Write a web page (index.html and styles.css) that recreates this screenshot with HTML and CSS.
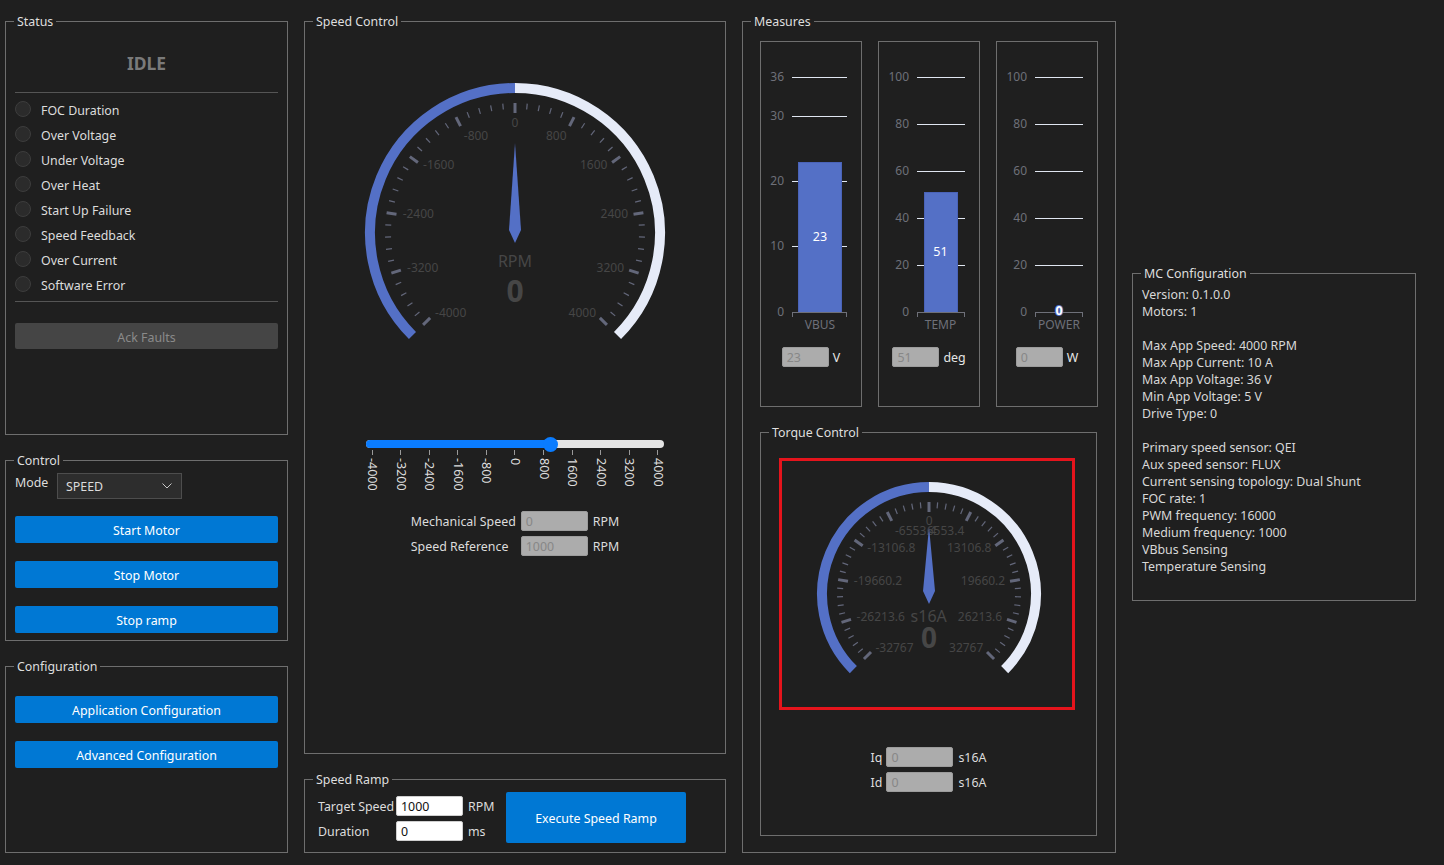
FILE: index.html
```html
<!DOCTYPE html>
<html lang="en">
<head>
<meta charset="utf-8">
<title>Motor Control</title>
<link rel="stylesheet" href="styles.css">
</head>
<body>
<div class="app">

  <div class="col col-left">
    <section class="group status">
      <div class="group-title">Status</div>
      <div class="status-body">
        <div class="state">IDLE</div>
        <div class="divider"></div>
        <ul class="faults">
          <li class="fault"><span class="led"></span><span class="fault-name">FOC Duration</span></li>
          <li class="fault"><span class="led"></span><span class="fault-name">Over Voltage</span></li>
          <li class="fault"><span class="led"></span><span class="fault-name">Under Voltage</span></li>
          <li class="fault"><span class="led"></span><span class="fault-name">Over Heat</span></li>
          <li class="fault"><span class="led"></span><span class="fault-name">Start Up Failure</span></li>
          <li class="fault"><span class="led"></span><span class="fault-name">Speed Feedback</span></li>
          <li class="fault"><span class="led"></span><span class="fault-name">Over Current</span></li>
          <li class="fault"><span class="led"></span><span class="fault-name">Software Error</span></li>
        </ul>
        <div class="divider divider-bottom"></div>
        <div class="btn btn-ack">Ack Faults</div>
      </div>
    </section>

    <section class="group control">
      <div class="group-title">Control</div>
      <div class="control-body">
        <div class="mode-row">
          <span class="mode-label">Mode</span>
          <div class="select">
            <span>SPEED</span>
            <svg class="chevron" width="10" height="6" viewBox="0 0 10 6"><polyline points="0.5,0.5 5,5 9.5,0.5"/></svg>
          </div>
        </div>
        <div class="btn-stack">
          <div class="btn">Start Motor</div>
          <div class="btn">Stop Motor</div>
          <div class="btn">Stop ramp</div>
        </div>
      </div>
    </section>

    <section class="group config">
      <div class="group-title">Configuration</div>
      <div class="config-body">
        <div class="btn-stack">
          <div class="btn">Application Configuration</div>
          <div class="btn">Advanced Configuration</div>
        </div>
      </div>
    </section>
  </div>

  <div class="col col-speed">
    <section class="group speed">
      <div class="group-title">Speed Control</div>
      <svg class="gauge" width="420" height="316" viewBox="305 29 420 316">
        <path class="arc arc-on" d="M 412.47 335.53 A 145 145 0 0 1 515 88"/>
        <path class="arc arc-off" d="M 515 88 A 145 145 0 0 1 617.53 335.53"/>
        <g id="speed-ticks"></g>
        <g class="g-label">
          <text x="515" y="122.7">0</text>
          <text x="476" y="135.7">-800</text>
          <text x="556.3" y="135.7">800</text>
          <text x="438.7" y="164.3">-1600</text>
          <text x="593.7" y="164.3">1600</text>
          <text x="418.3" y="213.3">-2400</text>
          <text x="614.3" y="213.3">2400</text>
          <text x="422.7" y="267.3">-3200</text>
          <text x="610.3" y="267.3">3200</text>
          <text x="450.7" y="312.3">-4000</text>
          <text x="582.3" y="312.3">4000</text>
        </g>
        <polygon class="needle" points="515,143 509,230 515,243 521,230"/>
        <text class="g-unit" x="515" y="261">RPM</text>
        <text class="g-value" x="515" y="290">0</text>
      </svg>

      <div class="slider">
        <div class="track" style="--v:0.625">
          <div class="track-fill"></div>
          <div class="thumb"></div>
        </div>
        <div class="scale">
          <div class="mark"><span>-4000</span></div>
          <div class="mark"><span>-3200</span></div>
          <div class="mark"><span>-2400</span></div>
          <div class="mark"><span>-1600</span></div>
          <div class="mark"><span>-800</span></div>
          <div class="mark"><span>0</span></div>
          <div class="mark"><span>800</span></div>
          <div class="mark"><span>1600</span></div>
          <div class="mark"><span>2400</span></div>
          <div class="mark"><span>3200</span></div>
          <div class="mark"><span>4000</span></div>
        </div>
      </div>

      <div class="readout">
        <span>Mechanical Speed</span><div class="field">0</div><span>RPM</span>
        <span>Speed Reference</span><div class="field">1000</div><span>RPM</span>
      </div>
    </section>

    <section class="group ramp">
      <div class="group-title">Speed Ramp</div>
      <div class="ramp-body">
        <div class="ramp-grid">
          <span>Target Speed</span><div class="field field-white">1000</div><span class="unit">RPM</span>
          <span>Duration</span><div class="field field-white">0</div><span class="unit">ms</span>
        </div>
        <div class="btn btn-exec">Execute Speed Ramp</div>
      </div>
    </section>
  </div>

  <div class="col col-measures">
    <section class="group measures">
      <div class="group-title">Measures</div>
      <div class="bars">
        <div class="bar-box">
          <svg class="chart" width="100" height="294" viewBox="0 0 100 294">
            <g class="grid">
              <line x1="31" y1="35.5" x2="86" y2="35.5"/>
              <line x1="31" y1="74.5" x2="86" y2="74.5"/>
              <line x1="31" y1="139.5" x2="86" y2="139.5"/>
              <line x1="31" y1="204.5" x2="86" y2="204.5"/>
            </g>
            <g class="ax-label">
              <text x="23" y="34">36</text>
              <text x="23" y="73">30</text>
              <text x="23" y="138.5">20</text>
              <text x="23" y="203.5">10</text>
              <text x="23" y="269">0</text>
            </g>
            <rect class="bar" x="37.5" y="120.5" width="43" height="150"/>
            <text class="bar-label" x="59" y="194">23</text>
            <path class="axis-line" d="M31 270.5 H86 M31.5 270.5 V275 M85.5 270.5 V275"/>
            <text class="cat-label" x="59" y="282.5">VBUS</text>
          </svg>
          <div class="meter-input"><div class="field field-small">23</div><span>V</span></div>
        </div>

        <div class="bar-box">
          <svg class="chart" width="100" height="294" viewBox="0 0 100 294">
            <g class="grid">
              <line x1="38" y1="35.5" x2="86" y2="35.5"/>
              <line x1="38" y1="82.5" x2="86" y2="82.5"/>
              <line x1="38" y1="129.5" x2="86" y2="129.5"/>
              <line x1="38" y1="176.5" x2="86" y2="176.5"/>
              <line x1="38" y1="223.5" x2="86" y2="223.5"/>
            </g>
            <g class="ax-label">
              <text x="30" y="34">100</text>
              <text x="30" y="81">80</text>
              <text x="30" y="128">60</text>
              <text x="30" y="175">40</text>
              <text x="30" y="222">20</text>
              <text x="30" y="269">0</text>
            </g>
            <rect class="bar" x="45.5" y="150.5" width="33" height="120"/>
            <text class="bar-label" x="61.5" y="209">51</text>
            <path class="axis-line" d="M38 270.5 H86 M38.5 270.5 V275 M85.5 270.5 V275"/>
            <text class="cat-label" x="61.5" y="282.5">TEMP</text>
          </svg>
          <div class="meter-input"><div class="field field-small">51</div><span>deg</span></div>
        </div>

        <div class="bar-box">
          <svg class="chart" width="100" height="294" viewBox="0 0 100 294">
            <g class="grid">
              <line x1="38" y1="35.5" x2="86" y2="35.5"/>
              <line x1="38" y1="82.5" x2="86" y2="82.5"/>
              <line x1="38" y1="129.5" x2="86" y2="129.5"/>
              <line x1="38" y1="176.5" x2="86" y2="176.5"/>
              <line x1="38" y1="223.5" x2="86" y2="223.5"/>
            </g>
            <g class="ax-label">
              <text x="30" y="34">100</text>
              <text x="30" y="81">80</text>
              <text x="30" y="128">60</text>
              <text x="30" y="175">40</text>
              <text x="30" y="222">20</text>
              <text x="30" y="269">0</text>
            </g>
            <path class="axis-line" d="M38 270.5 H86 M38.5 270.5 V275 M85.5 270.5 V275"/>
            <text class="zero-label" x="62" y="268.5">0</text>
            <text class="cat-label" x="62" y="282.5">POWER</text>
          </svg>
          <div class="meter-input"><div class="field field-small">0</div><span>W</span></div>
        </div>
      </div>

      <section class="group torque">
        <div class="group-title">Torque Control</div>
        <div class="redbox">
          <svg class="gauge-small" width="290" height="246" viewBox="782 461 290 246">
            <path class="arc arc-on" d="M 853.34 669.66 A 107 107 0 0 1 929 487"/>
            <path class="arc arc-off" d="M 929 487 A 107 107 0 0 1 1004.66 669.66"/>
            <g id="torque-ticks"></g>
            <g class="g-label">
              <text x="929.3" y="520.7">0</text>
              <text x="915.7" y="530">-6553.4</text>
              <text x="945.5" y="530">6553.4</text>
              <text x="891.3" y="547.7">-13106.8</text>
              <text x="969.2" y="547.7">13106.8</text>
              <text x="878" y="580.7">-19660.2</text>
              <text x="983" y="580.7">19660.2</text>
              <text x="880.7" y="616.7">-26213.6</text>
              <text x="980" y="616.7">26213.6</text>
              <text x="894.5" y="647.3">-32767</text>
              <text x="966.2" y="647.3">32767</text>
            </g>
            <polygon class="needle" points="929,527 923,591 929,604 935,591"/>
            <text class="g-unit" x="928.7" y="616">s16A</text>
            <text class="g-value g-value-small" x="929" y="637">0</text>
          </svg>
        </div>
        <div class="iq-grid">
          <span class="iq-label">Iq</span><div class="field">0</div><span class="unit">s16A</span>
          <span class="iq-label">Id</span><div class="field">0</div><span class="unit">s16A</span>
        </div>
      </section>
    </section>
  </div>

  <div class="col col-info">
    <section class="group mc">
      <div class="group-title">MC Configuration</div>
      <div class="mc-body">
        <p>Version: 0.1.0.0</p>
        <p>Motors: 1</p>
        <p></p>
        <p>Max App Speed: 4000 RPM</p>
        <p>Max App Current: 10 A</p>
        <p>Max App Voltage: 36 V</p>
        <p>Min App Voltage: 5 V</p>
        <p>Drive Type: 0</p>
        <p></p>
        <p>Primary speed sensor: QEI</p>
        <p>Aux speed sensor: FLUX</p>
        <p>Current sensing topology: Dual Shunt</p>
        <p>FOC rate: 1</p>
        <p>PWM frequency: 16000</p>
        <p>Medium frequency: 1000</p>
        <p>VBbus Sensing</p>
        <p>Temperature Sensing</p>
      </div>
    </section>
  </div>

</div>
<script src="script.js"></script>
</body>
</html>
```

FILE: styles.css
```css
* { box-sizing: border-box; }
html, body { margin: 0; padding: 0; background: #1f1f1f; }
body {
  width: 1444px;
  height: 865px;
  overflow: hidden;
  font-family: "Noto Sans", "Open Sans", sans-serif;
  font-size: 12.4px;
  color: #dcdcdc;
}

.app { display: flex; align-items: flex-start; gap: 16px; padding: 21px 0 0 5px; }
.col { display: flex; flex-direction: column; }
.col-left { width: 283px; }
.col-speed { width: 422px; }
.col-measures { width: 374px; }
.col-info { width: 284px; padding-top: 252px; }

.group { border: 1px solid #6e6e6e; }
.col > .group + .group { margin-top: 25px; }
.group-title {
  display: block;
  width: fit-content;
  height: 16px;
  margin: -9px 0 0 8px;
  padding: 0 3px;
  line-height: 18px;
  background: #1f1f1f;
  color: #dedede;
  white-space: nowrap;
}

.btn {
  display: flex;
  align-items: center;
  justify-content: center;
  height: 27px;
  padding-top: 2px;
  background: #0078d4;
  color: #fff;
  border-radius: 2px;
}
.btn-stack { display: flex; flex-direction: column; gap: 18px; }

/* Status */
.status { height: 414px; }
.status-body { padding: 0 9px; }
.state {
  margin-top: 22px;
  text-align: center;
  font-weight: 700;
  font-size: 17.5px;
  line-height: 24px;
  color: #7a7a7a;
}
.divider { height: 1px; background: #555; margin-top: 17px; }
.divider-bottom { margin-top: 5px; }
.faults { list-style: none; margin: 3px 0 0; padding: 0; }
.fault { height: 25px; display: flex; align-items: center; gap: 10px; }
.fault-name { margin-top: 3px; }
.led {
  flex: none;
  width: 16px;
  height: 16px;
  border-radius: 50%;
  background: #2b2b2b;
  border: 1px solid #3d3d3d;
}
.btn-ack { margin-top: 21px; height: 26px; background: #454545; color: #8a8a8a; }

/* Control */
.control { height: 181px; }
.control-body { padding: 5px 9px 0; }
.control-body .btn-stack { margin-top: 17px; }
.mode-row { display: flex; align-items: flex-start; }
.mode-label { width: 42px; line-height: 17px; margin-top: 1px; }
.select {
  width: 125px;
  height: 26px;
  display: flex;
  align-items: center;
  justify-content: space-between;
  padding: 1px 9px 0 8px;
  background: #2d2d2d;
  border: 1px solid #4d4d4d;
  color: #dcdcdc;
}
.chevron { margin-top: -1px; }
.chevron polyline { fill: none; stroke: #c8c8c8; stroke-width: 1; }

/* Configuration */
.config { height: 187px; }
.config-body { padding: 22px 9px 0; }

/* Speed control */
.speed { height: 733px; }
.gauge { display: block; }
.arc { fill: none; stroke-width: 10; }
.arc-on { stroke: #5470c6; }
.arc-off { stroke: #e6ebf8; }
.tick-major { stroke: #63677a; stroke-width: 3; }
.tick-minor { stroke: #63677a; stroke-width: 1.2; }
.g-label text {
  fill: #464646;
  font-size: 12px;
  text-anchor: middle;
  dominant-baseline: central;
}
.needle { fill: #5470c6; }
.g-unit { fill: #464646; font-size: 16px; text-anchor: middle; dominant-baseline: central; }
.g-value { fill: #464646; font-size: 30px; font-weight: 700; text-anchor: middle; dominant-baseline: central; }
.g-value-small { font-size: 28px; }

.slider { margin: 95px 61px 0; }
.track { position: relative; height: 8px; border-radius: 4px; background: #e4e4e4; }
.track-fill {
  height: 100%;
  width: calc(6px + var(--v) * (100% - 12px));
  border-radius: 4px;
  background: #0a7cff;
}
.thumb {
  position: absolute;
  top: 50%;
  left: calc(6px + var(--v) * (100% - 12px));
  width: 15px;
  height: 15px;
  margin: -7.5px 0 0 -7.5px;
  border-radius: 50%;
  background: #0a7cff;
}
.scale { display: flex; justify-content: space-between; margin-top: 2px; height: 41px; }
.mark { width: 12px; display: flex; flex-direction: column; align-items: center; }
.mark::before { content: ""; width: 1px; height: 5px; background: #9a9a9a; }
.mark span {
  writing-mode: vertical-rl;
  margin-top: 3px;
  font-size: 12.5px;
  line-height: 14px;
  color: #dcdcdc;
  white-space: nowrap;
}

.readout {
  display: grid;
  grid-template-columns: auto 67px auto;
  column-gap: 5px;
  row-gap: 5px;
  justify-content: center;
  align-items: center;
  margin-top: 20px;
}
.field {
  height: 20px;
  padding: 0 4px;
  line-height: 19px;
  background: #acacac;
  border: 1px solid #9c9c9c;
  border-radius: 2px;
  color: #878787;
}
.field-white { background: #fff; border-color: #cfcfcf; color: #111; }
.field-small { width: 47px; }

/* Speed ramp */
.ramp { height: 74px; }
.ramp-body { display: flex; align-items: flex-start; padding: 5px 0 0 13px; }
.ramp-grid {
  display: grid;
  grid-template-columns: 78px 67px 37px;
  row-gap: 5px;
  align-items: center;
  margin-top: 4px;
}
.ramp-grid .unit { padding-left: 5px; }
.btn-exec { width: 180px; height: 51px; margin-left: 6px; }

/* Measures */
.measures { height: 832px; }
.bars { display: flex; gap: 16px; padding: 12px 0 0 17px; }
.bar-box { width: 102px; height: 366px; border: 1px solid #6e6e6e; }
.chart { display: block; }
.grid line { stroke: #e0e6f1; stroke-width: 1; }
.ax-label text { fill: #6e7079; font-size: 12px; text-anchor: end; dominant-baseline: central; }
.bar { fill: #5470c6; stroke: #4a63b8; stroke-width: 1; }
.bar-label { fill: #fff; font-size: 12.5px; text-anchor: middle; dominant-baseline: central; }
.axis-line { fill: none; stroke: #6e7079; stroke-width: 1; }
.cat-label { fill: #6e7079; font-size: 12px; text-anchor: middle; dominant-baseline: central; }
.zero-label {
  fill: #fff;
  stroke: #5470c6;
  stroke-width: 2px;
  paint-order: stroke;
  font-size: 12.5px;
  font-weight: 700;
  text-anchor: middle;
  dominant-baseline: central;
}
.meter-input { display: flex; justify-content: center; align-items: center; gap: 4px; margin-top: 11px; color: #e6e6e6; }

/* Torque */
.torque { width: 337px; height: 404px; margin: 25px 0 0 17px; }
.redbox { width: 296px; height: 252px; margin: 18px 0 0 18px; border: 3px solid #e5141c; }
.gauge-small { display: block; }
.iq-grid {
  display: grid;
  grid-template-columns: auto 67px auto;
  column-gap: 4px;
  row-gap: 5px;
  justify-content: center;
  align-items: center;
  margin-top: 37px;
}
.iq-label { justify-self: end; }
.iq-grid .unit { padding-left: 1px; }

/* MC configuration */
.mc { height: 328px; }
.mc-body { padding: 5px 9px 0; line-height: 17px; color: #d8d8d8; }
.mc-body p { margin: 0; min-height: 17px; white-space: nowrap; }
```

FILE: script.js
```js
(function () {
  var NS = 'http://www.w3.org/2000/svg';
  function ticks(id, cx, cy, r) {
    var g = document.getElementById(id);
    for (var i = 0; i <= 50; i++) {
      var major = i % 5 === 0;
      var a = (-135 + i * 5.4) * Math.PI / 180;
      var r2 = r - (major ? 10 : 6);
      var s = Math.sin(a), c = Math.cos(a);
      var l = document.createElementNS(NS, 'line');
      l.setAttribute('x1', (cx + r * s).toFixed(2));
      l.setAttribute('y1', (cy - r * c).toFixed(2));
      l.setAttribute('x2', (cx + r2 * s).toFixed(2));
      l.setAttribute('y2', (cy - r2 * c).toFixed(2));
      l.setAttribute('class', major ? 'tick-major' : 'tick-minor');
      g.appendChild(l);
    }
  }
  ticks('speed-ticks', 515, 233, 130);
  ticks('torque-ticks', 929, 594, 92);
})();
```
